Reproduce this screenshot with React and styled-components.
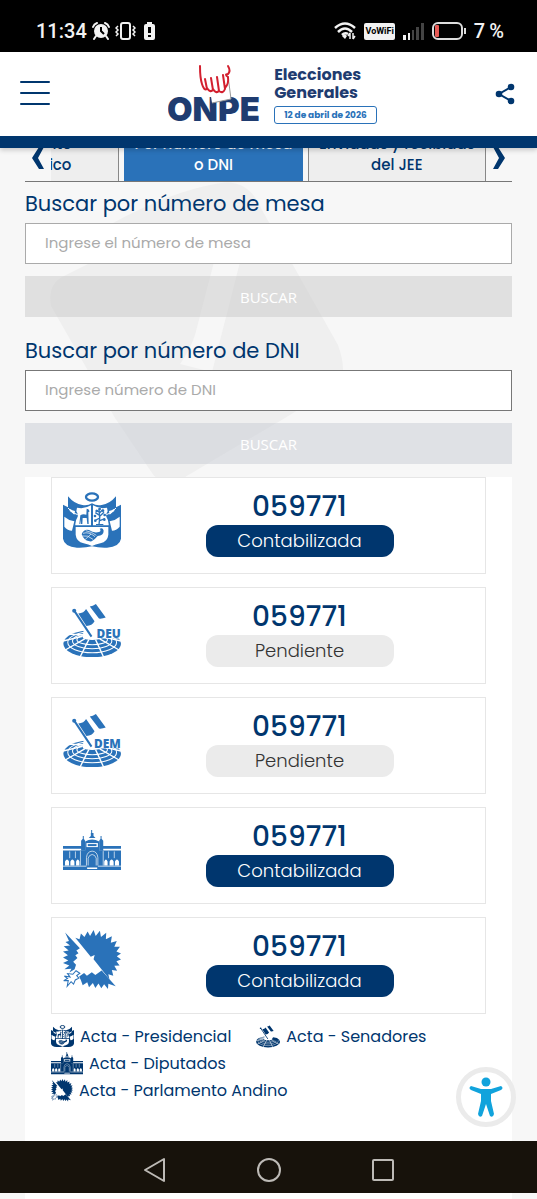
import React from 'react'
import styled, { createGlobalStyle } from 'styled-components'

const NAVY = '#00366e'
const BLUE = '#2a72b9'

const GlobalStyle = createGlobalStyle`
  * {
    box-sizing: border-box;
  }
  body {
    margin: 0;
    background-color: #f7f7f7;
    font-family: Poppins, Inter, sans-serif;
    color: ${NAVY};
  }
  button, input {
    font-family: inherit;
    margin: 0;
  }
`

const Page = styled.div`
  display: flex;
  flex-direction: column;
  min-height: 100vh;
`

const StatusBar = styled.div`
  display: flex;
  align-items: center;
  justify-content: space-between;
  height: 52px;
  padding: 10px 33px 0 36px;
  background-color: #000;
  color: #f2f2f2;
  font-family: Roboto, sans-serif;
  font-size: 20px;
  font-weight: 500;
`
const StatusGroup = styled.div`
  display: flex;
  align-items: center;
  gap: 5px;
`
const SignalGroup = styled(StatusGroup)`
  gap: 8px;
`
const WifiTag = styled.span`
  padding: 0 1px;
  border-radius: 2px;
  background-color: #f2f2f2;
  color: #000;
  font-size: 9px;
  font-weight: bold;
  line-height: 17px;
`

const Header = styled.header`
  position: relative;
  z-index: 2;
  display: flex;
  align-items: center;
  justify-content: space-between;
  height: 96px;
  padding: 0 22px 0 20px;
  background-color: #fff;
  border-bottom: 12px solid ${NAVY};
  box-shadow: 0 2px 5px rgba(0, 0, 0, 0.2);
`
const IconButton = styled.button`
  display: flex;
  padding: 0;
  border: none;
  background: none;
  color: ${NAVY};
  cursor: pointer;
`
const Brand = styled.a`
  display: flex;
  align-items: flex-end;
  gap: 8px;
  color: #1f3c70;
  text-decoration: none;
`
const BrandText = styled.div`
  display: flex;
  flex-direction: column;
  font-size: 16px;
  font-weight: 700;
  line-height: 18px;
`
const DateBadge = styled.span`
  margin-top: 4px;
  padding: 0 9px;
  border: 1px solid ${BLUE};
  border-radius: 3px;
  color: ${BLUE};
  font-size: 9px;
  font-weight: 700;
  line-height: 16px;
`

const Main = styled.main`
  position: relative;
  z-index: 0;
  display: flex;
  flex-direction: column;
  flex: 1;
  padding: 0 25px;
`
const Watermark = styled.svg`
  position: absolute;
  top: 32px;
  left: 50px;
  z-index: -1;
`
const TabBar = styled.nav`
  display: flex;
  height: 34px;
  overflow: hidden;
  border-bottom: 1px solid #777;
`
const TabArrow = styled(IconButton)`
  flex: 0 0 26px;
  align-items: center;
  justify-content: center;
  padding-bottom: 14px;
`
const TabList = styled.div`
  display: flex;
  flex: 1;
  align-items: flex-end;
  justify-content: flex-end;
  gap: 5px;
  min-width: 0;
  overflow: hidden;
`
const Tab = styled.button`
  flex: 0 0 41%;
  padding: 6px 9px;
  border: solid #888;
  border-width: ${props => props.$active ? '0' : '0 1px'};
  background-color: ${props => props.$active ? BLUE : '#eee'};
  color: ${props => props.$active ? '#fff' : NAVY};
  font-size: 15px;
  font-weight: 500;
  line-height: 21px;
  cursor: pointer;
`

const SearchForm = styled.form`
  display: flex;
  flex-direction: column;
  padding-bottom: 13px;
`
const SearchLabel = styled.label`
  padding-top: ${props => props.$spaced ? '14px' : '2px'};
  font-size: 21px;
  font-weight: 400;
  line-height: 39px;
`
const SearchInput = styled.input`
  width: 100%;
  height: 41px;
  margin-bottom: 12px;
  padding: 0 19px 2px;
  border: 1px solid ${props => props.$strong ? '#777' : '#aaa'};
  border-radius: 0;
  background-color: #fff;
  font-size: 15px;
  outline: none;
  &::placeholder {
    color: #aaa;
    opacity: 1;
  }
`
const SearchButton = styled.button`
  height: 41px;
  border: none;
  background-color: ${props => props.$cool ? 'rgba(200, 203, 212, 0.5)' : 'rgba(202, 202, 202, 0.5)'};
  color: #fff;
  font-family: "Open Sans", sans-serif;
  font-size: 15px;
  font-weight: 400;
`

const Results = styled.section`
  display: flex;
  flex-direction: column;
  flex: 1;
  gap: 13px;
  padding: 0 26px;
  background-color: #fff;
`
const Card = styled.article`
  display: grid;
  grid-template-columns: 62px 1fr;
  height: 97px;
  padding: 11px;
  border: 1px solid #e6e6e6;
`
const CardIcon = styled.div`
  display: flex;
  align-items: center;
  width: 58px;
  height: 62px;
`
const CardBody = styled.div`
  display: flex;
  flex-direction: column;
  align-items: center;
`
const ActaNumber = styled.div`
  font-size: 28px;
  font-weight: 500;
  line-height: 36px;
`
const Status = styled.div`
  width: 188px;
  border-radius: 12px;
  background-color: ${props => props.$done ? NAVY : '#ebebeb'};
  color: ${props => props.$done ? '#fff' : '#333'};
  font-size: 18px;
  font-weight: 300;
  line-height: 32px;
  text-align: center;
`

const Legend = styled.ul`
  display: flex;
  flex-wrap: wrap;
  column-gap: 25px;
  margin: -4px 0 0;
  padding: 0;
  list-style: none;
`
const LegendItem = styled.li`
  display: flex;
  flex-basis: ${props => props.$full ? '100%' : 'auto'};
  align-items: center;
  gap: 6px;
  height: 27px;
  font-size: 16px;
`

const AccessButton = styled(IconButton)`
  position: fixed;
  right: 21px;
  bottom: 72px;
  z-index: 1;
  align-items: center;
  justify-content: center;
  width: 60px;
  height: 60px;
  border: 5px solid #ebebeb;
  border-radius: 50%;
  background-color: #fff;
  color: #11a3dc;
`
const SystemNav = styled.div`
  display: flex;
  align-items: center;
  justify-content: center;
  gap: 90px;
  height: 52px;
  padding-top: 6px;
  background-color: #17120b;
`
const NavButton = styled(IconButton)`
  color: #bdbab6;
`
const BottomEdge = styled.div`
  height: 6px;
  padding: 0 25px;
  background-color: #fff;
  background-clip: content-box;
`

const Emblem = ({ width }) => (
  <svg width={width} viewBox="0 0 174 168" fill="currentColor" aria-hidden="true">
    <ellipse cx="87" cy="15" rx="18" ry="11" fill="none" stroke="currentColor" strokeWidth="7" />
    <path d="M0 38 L15 46 V13 Q34 36 58 39 Q74 42 87 34 Q100 42 116 39 Q140 36 159 13 V46 L174 38 V140 Q170 164 132 167 Q108 168 87 163 Q66 168 42 167 Q4 164 0 140Z" />
    <g fill="#fff">
      <path d="M4 74 Q18 86 34 88 L27 116 Q14 116 4 104Z M170 74 Q156 86 140 88 L147 116 Q160 116 170 104Z" />
      <path d="M20 50 Q28 56 36 57 L34 68 Q26 60 20 57Z M154 50 Q146 56 138 57 L140 68 Q148 60 154 57Z" />
      <path d="M42 47 Q64 52 84 40 V100 H37 Q36 86 44 74 Q46 66 40 58Z" />
      <path d="M132 47 Q110 52 90 40 V100 H137 Q138 86 130 74 Q128 66 134 58Z" />
      <path d="M38 105 H136 V128 Q134 149 112 154 Q97 157 87 162 Q77 157 62 154 Q40 149 38 128Z" />
    </g>
    <path d="M15 48 Q30 66 44 68 M159 48 Q144 66 130 68" fill="none" stroke="#fff" strokeWidth="3" />
    <path d="M49 96 L52 70 Q60 64 70 68 L71 50 L76 52 L80 58 L76 61 L77 96 H73 L71 78 L59 78 L58 96 H54 L54 82 L52 96Z" />
    <path d="M108 98 L110 78 L99 84 M110 78 L108 50 M110 70 L97 62 M111 72 L123 61 M110 86 L126 80 M109 61 L100 54 M110 62 L119 53" fill="none" stroke="currentColor" strokeWidth="4" />
    <g>
      <circle cx="96" cy="72" r="4" /><circle cx="101" cy="57" r="4" /><circle cx="110" cy="51" r="4" />
      <circle cx="120" cy="56" r="4" /><circle cx="125" cy="69" r="4" /><circle cx="124" cy="83" r="4" /><circle cx="97" cy="86" r="4" />
      <path d="M99 96 H121 V99 H99Z" />
    </g>
    <path d="M56 127 Q62 110 78 114 Q92 124 108 120 Q116 116 110 110 Q120 106 122 116 Q122 130 104 132 Q96 142 86 148 Q64 150 56 127Z" />
    <path d="M60 124 Q78 118 96 134 M58 132 Q74 128 90 142 M68 116 Q88 120 100 130 M66 143 L84 126" fill="none" stroke="#fff" strokeWidth="2" />
  </svg>
)

const Chamber = ({ width, label }) => (
  <svg width={width} viewBox="0 0 171 162" fill="currentColor" aria-hidden="true">
    <ellipse cx="86" cy="120" rx="85" ry="40" />
    <g fill="none" stroke="#fff" strokeWidth="3">
      <ellipse cx="86" cy="116" rx="72" ry="31" />
      <ellipse cx="86" cy="112" rx="58" ry="23" />
      <ellipse cx="86" cy="108" rx="45" ry="15" />
      <path d="M76 108 L50 160 M96 108 L120 160 M64 106 L4 140 M108 106 L168 140 M58 98 L0 112 M112 98 L171 112 M64 94 L20 92" strokeWidth="4" />
    </g>
    <ellipse cx="86" cy="102" rx="28" ry="7" fill="#fff" />
    <path d="M62 74 H171 V105 H92 L58 100Z" fill="#fff" />
    <path d="M34 24 L84 99" fill="none" stroke="currentColor" strokeWidth="6" />
    <circle cx="33" cy="23" r="6" />
    <path d="M45 31 Q62 30 68 18 L93 54 Q86 67 69 68Z" />
    <path d="M79 10 Q88 10 97 3 L126 43 Q116 47 106 46Z" />
    {label
      ? <text x="170" y="102" textAnchor="end" fontFamily="Open Sans, sans-serif" fontSize="35" fontWeight="800">{label}</text>
      : <path d="M112 103 L122 88 Q154 90 168 108 L150 114Z" />}
  </svg>
)

const Palace = ({ width }) => (
  <svg width={width} viewBox="0 0 173 120" fill="currentColor" aria-hidden="true">
    <path d="M84 0 H87 V9 H91 V18 L97 24 H77 L83 18 V9 H84Z" />
    <path d="M59 18 H62 V26 L66 32 V62 H54 V32 L59 26Z M112 18 H115 V26 L120 32 V62 H108 V32 L112 26Z" />
    <path d="M66 34 Q87 22 108 34 V64 H66Z M0 48 H58 V56 H0Z M115 48 H173 V56 H115Z M0 61 H173 V120 H0Z" />
    <g fill="#fff">
      <path d="M70 39 H104 V51 H70Z" />
      <path d="M6 94 Q12 82 18 94 V106 H6Z M22 94 Q28 82 34 94 V106 H22Z M39 94 Q44 82 49 94 V106 H39Z M123 94 Q128 82 133 94 V106 H123Z M139 94 Q145 82 151 94 V106 H139Z M155 94 Q161 82 167 94 V106 H155Z" />
      <path d="M72 116 H102 V112 H72Z M0 107 H70 V109 H0Z M104 107 H173 V109 H104Z" />
    </g>
    <path d="M74 42 H100 V48 H74Z" />
    <path d="M70 106 V82 Q72 64 87 63 Q102 64 104 82 V106 M75 106 V84 Q78 74 87 73 Q96 74 99 84 V106 M52 63 V106 M120 63 V106 M20 64 V84 M37 64 V84 M136 64 V84 M153 64 V84" fill="none" stroke="#fff" strokeWidth="2" />
  </svg>
)

const Sun = ({ width }) => (
  <svg width={width} viewBox="0 0 165 170" fill="currentColor" aria-hidden="true">
    <path d="M35 22 L47 26 L51 10 L61 20 L70 4 L77 17 L87 0 L93 17 L105 2 L108 20 L123 8 L122 26 L139 18 L136 36 L153 31 L146 48 L162 48 L152 61 L165 67 L153 75 L165 84 L152 89 L161 101 L146 102 L154 116 L139 114 L143 130 L129 126 L132 140 L87 83 L90 71 L79 76 Z" />
    <path d="M6 7 L48 52 L38 58 L44 66 L35 72 L41 80 L29 90 L37 99 L33 112 L18 121 L24 110 L4 112 L18 101 L0 94 L15 87 L0 78 L14 72 L0 61 L16 58 L2 46 L20 44 L7 34 L17 31Z" />
    <path d="M110 115 L150 160 L129 153 L128 168 L117 154 L109 166 L101 152 L92 165 L85 151 L74 163 L69 149 L56 157 L51 143 L46 132 L60 122 L68 130 L82 120 L92 128Z" />
    <path d="M4 131 L20 134 L13 124 L28 126 L37 116 L48 123 L39 130 L45 137 L35 142 L30 154 L23 147 L12 160 L15 144 L2 144 L13 138Z" fill="#fff" stroke="currentColor" strokeWidth="3" />
  </svg>
)

const icons = {
  presidencial: Emblem,
  senadores: Chamber,
  diputados: Palace,
  parlamento: Sun,
}

const actas = [
  { id: 1, icon: 'presidencial', number: '059771', status: 'Contabilizada' },
  { id: 2, icon: 'senadores', label: 'DEU', number: '059771', status: 'Pendiente' },
  { id: 3, icon: 'senadores', label: 'DEM', number: '059771', status: 'Pendiente' },
  { id: 4, icon: 'diputados', number: '059771', status: 'Contabilizada' },
  { id: 5, icon: 'parlamento', number: '059771', status: 'Contabilizada' },
]

const legend = [
  { icon: 'presidencial', text: 'Acta - Presidencial', width: 23 },
  { icon: 'senadores', text: 'Acta - Senadores', width: 24 },
  { icon: 'diputados', text: 'Acta - Diputados', width: 32, full: true },
  { icon: 'parlamento', text: 'Acta - Parlamento Andino', width: 22 },
]

const ActaCard = ({ item }) => {
  const Icon = icons[item.icon]
  return (
    <Card>
      <CardIcon style={{ color: BLUE }}><Icon width={58} label={item.label} /></CardIcon>
      <CardBody>
        <ActaNumber>{item.number}</ActaNumber>
        <Status $done={item.status === 'Contabilizada'}>{item.status}</Status>
      </CardBody>
    </Card>
  )
}

const Logo = () => (
  <svg width="98" height="60" viewBox="0 0 98 60" aria-hidden="true">
    <text x="-1" y="57" fontFamily="Inter, sans-serif" fontSize="33" fontWeight="900" fill="#1f3c70">ONPE</text>
    <path d="M42 26 L59 16 L63 35 L44 39Z" fill="#fff" />
    <path d="M60 12 L63 35 L44 39" fill="none" stroke="#999" strokeWidth="1" />
    <path d="M32 2 Q32 14 34 20 Q36 27 39 25 L37 15 M39 24 Q42 29 45 26 L43 14 M45 25 Q48 30 51 27 L49 13 M51 27 Q55 30 57 25 L55 11 M57 24 Q61 20 60 13 Q56 10 60 10 Q63 7 60 2" fill="none" stroke="#d3202f" strokeWidth="2" strokeLinecap="round" strokeLinejoin="round" />
  </svg>
)

const App = () => {
  return (
    <>
      <GlobalStyle />
      <Page>
        <StatusBar>
          <StatusGroup>
            <span>11:34</span>
            <svg width="18" height="18" viewBox="0 0 18 18" fill="#f2f2f2" aria-hidden="true">
              <circle cx="9" cy="9" r="7" />
              <path d="M4 14 L2 17 M14 14 L16 17 M1 5 Q2 2 5 1 M13 1 Q16 2 17 5" fill="none" stroke="#f2f2f2" strokeWidth="2" strokeLinecap="round" />
              <path d="M9 5 V9 L12 12" fill="none" stroke="#000" strokeWidth="2" />
            </svg>
            <svg width="21" height="18" viewBox="0 0 21 18" fill="none" stroke="#f2f2f2" strokeWidth="2" aria-hidden="true">
              <rect x="6" y="1" width="9" height="16" rx="2" />
              <path d="M3 4 L1 6 L3 8 L1 10 L3 12 L1 14 M18 4 L20 6 L18 8 L20 10 L18 12 L20 14" strokeWidth="1.5" />
            </svg>
            <svg width="20" height="18" viewBox="2 0 20 18" fill="#f2f2f2" aria-hidden="true">
              <path d="M5 2 H8 V0 H13 V2 H14 Q16 2 16 4 V16 Q16 18 14 18 H7 Q5 18 5 16 V4 Q5 2 7 2Z" />
              <path d="M9 5 H12 V11 H9Z M9 13 H12 V15 H9Z" fill="#000" />
            </svg>
          </StatusGroup>
          <SignalGroup>
            <svg width="22" height="18" viewBox="0 0 22 18" fill="none" stroke="#f2f2f2" strokeWidth="2.5" aria-hidden="true">
              <path d="M1 6 Q11 -3 21 6 M4 10 Q11 3 18 10 M8 13 Q11 10 14 12" />
              <path d="M8 14 L11 12 L13 14 L11 17Z" fill="#f2f2f2" stroke="none" />
              <path d="M16 11 V17 M19 11 V17 M14 14 L16 11 M21 14 L19 17" strokeWidth="1.5" />
            </svg>
            <WifiTag>VoWiFi</WifiTag>
            <svg width="21" height="18" viewBox="0 0 21 18" fill="#f2f2f2" aria-hidden="true">
              <path d="M0 13 H3 V18 H0Z M5 11 H7 V18 H5Z" />
              <path d="M9 8 H11 V18 H9Z M13 5 H16 V18 H13Z M18 1 H21 V18 H18Z" fill="#444" />
            </svg>
            <svg width="34" height="18" viewBox="0 0 34 18" aria-hidden="true">
              <rect x="1" y="1" width="29" height="16" rx="5" fill="none" stroke="#ddd" strokeWidth="2" />
              <rect x="3" y="3" width="4" height="12" rx="1" fill="#e65a55" />
              <path d="M32 6 H34 V12 H32Z" fill="#ddd" />
            </svg>
            <span>7&thinsp;%</span>
          </SignalGroup>
        </StatusBar>

        <Header>
          <IconButton type="button" aria-label="Menú">
            <svg width="30" height="28" viewBox="0 0 30 28" fill="none" stroke="currentColor" strokeWidth="2" strokeLinecap="round">
              <path d="M1 2 H29 M1 13 H29 M1 24 H29" />
            </svg>
          </IconButton>
          <Brand href="#inicio" aria-label="ONPE Elecciones Generales">
            <Logo />
            <BrandText>
              <span>Elecciones</span>
              <span>Generales</span>
              <DateBadge>12 de abril de 2026</DateBadge>
            </BrandText>
          </Brand>
          <IconButton type="button" aria-label="Compartir">
            <svg width="20" height="22" viewBox="0 0 20 22" fill="currentColor">
              <path d="M16 4 L4 11 L16 18" fill="none" stroke="currentColor" strokeWidth="2" />
              <circle cx="16" cy="4" r="3.3" /><circle cx="4" cy="11" r="3.3" /><circle cx="16" cy="18" r="3.3" />
            </svg>
          </IconButton>
        </Header>

        <Main>
          <Watermark width="296" height="305" viewBox="50 180 296 305" fill="#efefef" aria-hidden="true">
            <path d="M51 306 Q47 284 64 276 L88 264 L113 223 Q170 192 215 184 Q248 176 262 210 L338 345 Q347 370 340 384 L285 418 L180 480 Q160 488 150 470 L115 418Z" />
            <path d="M214 262 H240 L212 372 L180 364 Q190 350 195 335Z" fill="#f7f7f7" />
          </Watermark>
          <TabBar>
            <TabArrow type="button" aria-label="Anterior">
              <svg width="12" height="22" viewBox="0 0 12 22" fill="currentColor"><path d="M7 0 H12 L6 11 L12 22 H7 L0 11Z" /></svg>
            </TabArrow>
            <TabList>
              <Tab type="button">Por ámbito geográfico</Tab>
              <Tab type="button" $active>Por número de mesa o DNI</Tab>
              <Tab type="button">Enviadas y recibidas del JEE</Tab>
            </TabList>
            <TabArrow type="button" aria-label="Siguiente">
              <svg width="12" height="22" viewBox="0 0 12 22" fill="currentColor"><path d="M5 0 H0 L6 11 L0 22 H5 L12 11Z" /></svg>
            </TabArrow>
          </TabBar>

          <SearchForm>
            <SearchLabel htmlFor="mesa">Buscar por número de mesa</SearchLabel>
            <SearchInput id="mesa" placeholder="Ingrese el número de mesa" />
            <SearchButton type="button">BUSCAR</SearchButton>
            <SearchLabel htmlFor="dni" $spaced>Buscar por número de DNI</SearchLabel>
            <SearchInput id="dni" placeholder="Ingrese número de DNI" $strong />
            <SearchButton type="button" $cool>BUSCAR</SearchButton>
          </SearchForm>

          <Results>
            {actas.map(item => <ActaCard key={item.id} item={item} />)}
            <Legend>
              {legend.map(({ icon, text, width, full }) => {
                const Icon = icons[icon]
                return (
                  <LegendItem key={icon} $full={full}>
                    <Icon width={width} />
                    <span>{text}</span>
                  </LegendItem>
                )
              })}
            </Legend>
          </Results>
        </Main>

        <AccessButton type="button" aria-label="Accesibilidad">
          <svg width="34" height="40" viewBox="0 0 34 40" fill="currentColor">
            <circle cx="17" cy="5" r="4.5" />
            <path d="M2 9 L12 12 H22 L32 9 Q35 11 32 13 L22 17 V24 L25 37 Q24 41 21 39 L17 27 L13 39 Q10 41 9 37 L12 24 V17 L2 13 Q-1 11 2 9Z" />
          </svg>
        </AccessButton>

        <SystemNav>
          <NavButton type="button" aria-label="Atrás">
            <svg width="24" height="26" viewBox="0 0 24 26" fill="none" stroke="currentColor" strokeWidth="2" strokeLinejoin="round"><path d="M2 13 L21 2 V24Z" /></svg>
          </NavButton>
          <NavButton type="button" aria-label="Inicio">
            <svg width="24" height="24" viewBox="0 0 24 24" fill="none" stroke="currentColor" strokeWidth="2"><circle cx="12" cy="12" r="11" /></svg>
          </NavButton>
          <NavButton type="button" aria-label="Recientes">
            <svg width="24" height="24" viewBox="0 0 24 24" fill="none" stroke="currentColor" strokeWidth="2"><rect x="2" y="2" width="20" height="20" rx="1" /></svg>
          </NavButton>
        </SystemNav>
        <BottomEdge />
      </Page>
    </>
  )
}

export default App
